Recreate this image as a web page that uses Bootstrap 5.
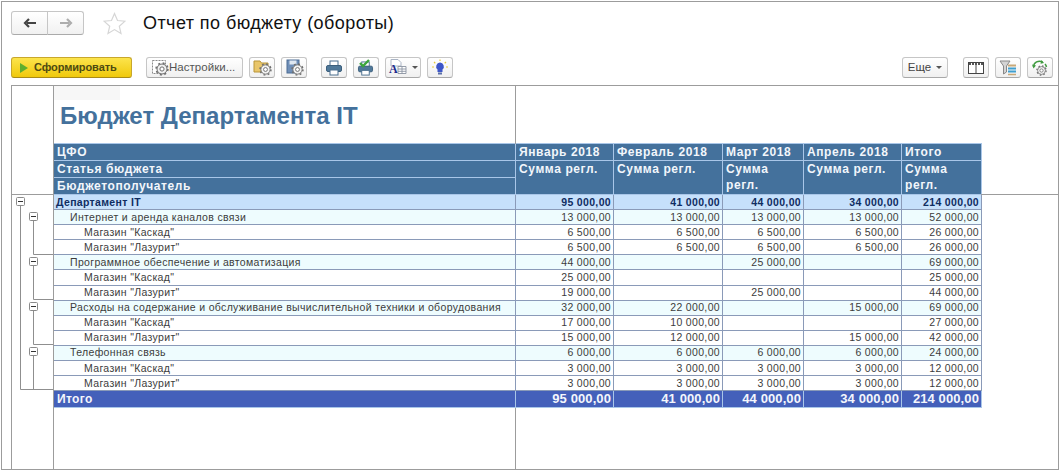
<!DOCTYPE html>
<html lang="ru">
<head>
<meta charset="utf-8">
<title>Отчет по бюджету (обороты)</title>
<link href="https://cdn.jsdelivr.net/npm/bootstrap@5.3.0/dist/css/bootstrap.min.css" rel="stylesheet">
<style>
html,body{margin:0;background:#fff;overflow:hidden}
body{font-family:"Liberation Sans",Arial,sans-serif}
.frame{width:1058px;height:469px;margin:1px 0 0 1px;border:1px solid #9c9c9c;padding:9px 0 0 9px;overflow:hidden;display:flex;flex-direction:column}
.head-bar{height:24px;margin-bottom:22px}
.nav-pair{width:73px;height:24px;margin-right:19px}
.nav-btn{width:36.5px;height:24px;padding:0;display:flex;align-items:center;justify-content:center;background:linear-gradient(#fff,#f1f1f1);border:1px solid #c6c6c6;border-bottom-color:#aaa;border-radius:3px}
.page-name{font-size:18px;line-height:24px;color:#111;margin:0 0 0 17px;font-weight:400;letter-spacing:.43px}
.tool-bar{height:21px;margin-bottom:7px;padding-right:5px}
.tb{height:21px;padding:0;width:26px;display:flex;align-items:center;justify-content:center;background:linear-gradient(#fff,#f0f0f0);border:1px solid #c6c6c6;border-bottom-color:#a8a8a8;border-radius:3px;font-size:11.5px;color:#444;flex:none;line-height:1}
.tb-go{width:121px;margin-right:14px;justify-content:flex-start;padding-left:8px;gap:6px;background:linear-gradient(#fce44c,#f0c90c);border-color:#c8a72c;border-bottom-color:#a88b18;color:#4d4a12;font-weight:700;font-size:11px;letter-spacing:-.1px}
.tb-set{width:97px;margin-right:6px;justify-content:flex-start;padding-left:5px;gap:0;color:#555;letter-spacing:.03px}
.tb-more{width:46px;margin-left:auto;margin-right:15px;gap:5px}
.tb-font{width:36px}
.m6{margin-right:6px}.m14{margin-right:14px}
.caret-mini{width:0;height:0;border-left:3px solid transparent;border-right:3px solid transparent;border-top:3px solid #555}
.rpt-wrap{flex:1;min-height:0;margin:0}
.rpt.table{width:1047px;height:384px;table-layout:fixed;margin:0;border-collapse:collapse;font-size:10.5px;letter-spacing:.34px;--bs-table-bg:#fff}
.rpt.table>:not(caption)>*>*{padding:0;border:0 none;line-height:13px;vertical-align:middle;overflow:hidden;white-space:nowrap;color:#3c3c3c}
.rpt.table>tbody>tr>.gut{border-left:1px solid #9c9c9c;border-right:1px solid #9c9c9c;vertical-align:top;--bs-table-bg:#fff}
.rpt.table>tbody>tr>.gut-head{border-top:1px solid #9c9c9c;border-bottom:1px solid #9c9c9c}
.rpt.table>tbody>tr>.ttl{border-top:1px solid #9c9c9c;border-right:1px solid #9c9c9c;vertical-align:top;height:58px}
.rpt.table>tbody>tr>.blank{border-top:1px solid #9c9c9c}
.rpt.table>tbody>tr>.fill-top{border-bottom:1px solid #9c9c9c}
.rpt.table>tbody>tr>.fill-mid{--bs-table-bg:#fff}
.rpt.table>tbody>tr>.low{border-right:1px solid #9c9c9c}
.strip{width:66px;height:14px;background:#f7f7f7}
.rep-title{font-size:24px;font-weight:700;line-height:30px;color:#44719c;letter-spacing:0;padding-left:6px;margin:1px 0 0}
.rpt.table>tbody>tr>.hc{--bs-table-bg:#44719c;color:#f2f6fb;border:1px solid #a9c6e8;font-size:12px;font-weight:700;padding:0 3px;line-height:16px;letter-spacing:.6px;height:17px;white-space:normal;vertical-align:top}
.rpt.table>tbody>tr>.dc{border:1px solid #8a9ab8;height:15px;text-align:right;padding:0 2px 0 0}
.rpt.table>tbody>tr>.nm{text-align:left;padding:0}
.rpt.table>tbody>tr>.pad1{padding-left:16px}
.rpt.table>tbody>tr>.pad2{padding-left:30px}
.rpt.table>tbody>tr>.cell-dept{--bs-table-bg:#c6e0fb;color:#0f2d62;font-weight:700}
.rpt.table>tbody>tr>.nm.cell-dept{padding-left:2px}
.r-grp>td{--bs-table-bg:#eefcfe}
.rpt.table>tbody>tr.r-tot>.dc{--bs-table-bg:#4460ba;color:#f4f6fc;font-weight:700;font-size:12px;letter-spacing:.35px;height:16px;line-height:14px;border-color:#a9c6e8}
.rpt.table>tbody>tr.r-tot>.num-big{font-size:13px;letter-spacing:.1px}
.rpt.table>tbody>tr.r-tot>.nm{padding-left:3px}
svg{display:block}
</style>
</head>
<body>
<svg width="0" height="0" style="position:absolute">
<defs>
<symbol id="gear" viewBox="0 0 14 14"><circle cx="7" cy="7" r="5" fill="#f2f2f2" stroke="#6f6f6f" stroke-width="1"/><circle cx="7" cy="7" r="5.9" fill="none" stroke="#6f6f6f" stroke-width="1.6" stroke-dasharray="2 2.63"/><circle cx="7" cy="7" r="2.1" fill="#fff" stroke="#6f6f6f" stroke-width="1"/></symbol>
<symbol id="printer" viewBox="0 0 18 16"><rect x="5" y="1" width="8" height="5" fill="#fff" stroke="#4a6f8f"/><rect x="1.5" y="5.5" width="15" height="6" rx="1.5" fill="#4f7899" stroke="#3c5f7c"/><rect x="5" y="10" width="8" height="5" fill="#fff" stroke="#4a6f8f"/></symbol>
</defs>
</svg>
<div class="frame">
  <div class="head-bar d-flex align-items-center">
    <div class="nav-pair btn-group">
      <button class="nav-btn btn" type="button" aria-label="Назад"><svg width="14" height="10" viewBox="0 0 14 10"><path d="M13 5H4M6 1 2 5l4 4" fill="none" stroke="#444" stroke-width="2.2"/></svg></button>
      <button class="nav-btn btn" type="button" aria-label="Вперед"><svg width="14" height="10" viewBox="0 0 14 10"><path d="M1 5h9M8 1l4 4-4 4" fill="none" stroke="#adadad" stroke-width="2.2"/></svg></button>
    </div>
    <svg width="23" height="23" viewBox="0 0 23 23"><path d="M11.5 1.5l3 7 7.5.7-5.7 5 1.7 7.3-6.5-3.9-6.5 3.9 1.7-7.3L1 9.2l7.5-.7z" fill="#fff" stroke="#d6d6d6" stroke-width="1.2"/></svg>
    <h1 class="page-name">Отчет по бюджету (обороты)</h1>
  </div>
  <div class="tool-bar d-flex align-items-center">
    <button class="tb tb-go btn" type="button"><svg width="8" height="10" viewBox="0 0 8 10"><path d="M0 0l8 5-8 5z" fill="#5fae2e"/></svg>Сформировать</button>
    <button class="tb tb-set btn" type="button"><svg width="17" height="17" viewBox="0 0 17 17"><rect x=".5" y="1.5" width="13" height="13" fill="#fff" stroke="#8b8b8b" stroke-dasharray="2 1"/><use href="#gear" x="3" y="3" width="14" height="14"/></svg>Настройки...</button>
    <button class="tb m6 btn" type="button" aria-label="Открыть настройки"><svg width="19" height="17" viewBox="0 0 19 17"><path d="M1 2h6l1.500 2H15v9H1z" fill="#e9c66a" stroke="#b99538"/><use href="#gear" x="6" y="4" width="13" height="13"/></svg></button>
    <button class="tb m14 btn" type="button" aria-label="Сохранить настройки"><svg width="19" height="17" viewBox="0 0 19 17"><rect x="2" y="1" width="12" height="13" fill="#6f8fb8" stroke="#4d6c94"/><rect x="4.500" y="1.500" width="7" height="4" fill="#dfe8f2"/><use href="#gear" x="6" y="4" width="13" height="13"/></svg></button>
    <button class="tb m6 btn" type="button" aria-label="Печать"><svg width="18" height="16"><use href="#printer" width="18" height="16"/></svg></button>
    <button class="tb m6 btn" type="button" aria-label="Предпросмотр"><svg width="18" height="17" viewBox="0 0 18 17"><use href="#printer" y="2" width="17" height="15"/><path d="M3 4l3 3 6-6" fill="none" stroke="#3ba53b" stroke-width="2.4"/></svg></button>
    <button class="tb tb-font m6 btn" type="button" aria-label="Шрифт"><span class="d-flex align-items-center gap-1"><svg width="20" height="18" viewBox="0 0 20 18"><path d="M3 .5h7l3 3V7H3z" fill="#fff" stroke="#aab4c4"/><text x="1" y="14" font-family="Liberation Serif" font-weight="700" font-size="12" fill="#1c2a8c">A</text><path d="M10 7.500h8v7h-8zM10 10h8M10 12.300h8M14 7.500v7" fill="#fff" stroke="#8a93a2" stroke-width=".9"/></svg><i class="caret-mini"></i></span></button>
    <button class="tb btn" type="button" aria-label="Подсказка"><svg width="18" height="17" viewBox="0 0 18 17"><path d="M9 3.500a4 4 0 0 1 2.500 7V13h-5v-2.500A4 4 0 0 1 9 3.500z" fill="#3d56c8"/><rect x="7" y="13.500" width="4" height="2" fill="#5a6fa8"/><path d="M9 .5v1.500M3 3l1.300 1.200M15 3l-1.300 1.200M1 8h2M15 8h2" stroke="#e6c93a" stroke-width="1.200"/></svg></button>
    <button class="tb tb-more btn" type="button">Еще<i class="caret-mini"></i></button>
    <button class="tb m6 btn" type="button" aria-label="Колонки"><svg width="16" height="12" viewBox="0 0 16 12"><rect x=".5" y=".5" width="15" height="11" fill="#fff" stroke="#444"/><path d="M1 2h14" stroke="#555" stroke-width="2" stroke-dasharray="2 1"/><path d="M8 3v9" stroke="#444"/></svg></button>
    <button class="tb m6 btn" type="button" aria-label="Отбор"><svg width="18" height="16" viewBox="0 0 18 16"><path d="M1 1h10L7.500 6v6L4.500 14V6z" fill="#d4d4d4" stroke="#888"/><path d="M9 5.500h8" stroke="#c9a878" stroke-width="2"/><path d="M9 8.500h8M9 11.500h8" stroke="#3f9fd0" stroke-width="2"/><path d="M9 14.500h8" stroke="#c9a878" stroke-width="1.500"/></svg></button>
    <button class="tb btn" type="button" aria-label="Обновить"><svg width="18" height="17" viewBox="0 0 18 17"><path d="M2.500 8a6 6 0 0 1 9-5" fill="none" stroke="#3f9a3f" stroke-width="1.500"/><path d="M14 5a6 6 0 0 1 1.500 3" fill="none" stroke="#3f9a3f" stroke-width="1.500"/><path d="M1 5.500l1.500 4 2.500-3zM10.500 1l2.500 3-3.500.8z" fill="#3f9a3f"/><use href="#gear" x="5" y="6" width="11" height="11"/></svg></button>
  </div>
  <div class="rpt-wrap">
  <table class="rpt table">
    <colgroup><col style="width:42px"><col style="width:462px"><col style="width:98px"><col style="width:109px"><col style="width:81px"><col style="width:98px"><col style="width:80px"><col></colgroup>
    <tbody>
      <tr>
        <td class="gut gut-head" rowspan="4"></td>
        <td class="ttl"><div class="strip"></div><h2 class="rep-title">Бюджет Департамента IT</h2></td>
        <td class="blank" colspan="6"></td>
      </tr>
      <tr><td class="hc">ЦФО</td><td class="hc">Январь 2018</td><td class="hc">Февраль 2018</td><td class="hc">Март 2018</td><td class="hc">Апрель 2018</td><td class="hc">Итого</td><td class="fill-top" rowspan="3"></td></tr>
      <tr><td class="hc">Статья бюджета</td><td class="hc" rowspan="2">Сумма регл.</td><td class="hc" rowspan="2">Сумма регл.</td><td class="hc" rowspan="2">Сумма регл.</td><td class="hc" rowspan="2">Сумма регл.</td><td class="hc" rowspan="2">Сумма регл.</td></tr>
      <tr><td class="hc">Бюджетополучатель</td></tr>

      <tr><td class="gut" rowspan="14"><svg width="41" height="212" viewBox="0 0 41 212" aria-hidden="true">
        <g fill="none" stroke="#8f8f8f">
          <path d="M8.500 11V194.500H41"/>
          <path d="M21.500 26V59.500H41M21.500 71V104.500H41M21.500 116V149.500H41M21.500 161V194.500"/>
          <g fill="#fff" stroke="#8a8a8a">
            <rect x="4.500" y="2.500" width="8" height="8" rx="1"/>
            <rect x="17.500" y="17.500" width="8" height="8" rx="1"/>
            <rect x="17.500" y="62.500" width="8" height="8" rx="1"/>
            <rect x="17.500" y="107.500" width="8" height="8" rx="1"/>
            <rect x="17.500" y="152.500" width="8" height="8" rx="1"/>
          </g>
          <path d="M6 6.500h5M19 21.500h5M19 66.500h5M19 111.500h5M19 156.500h5" stroke="#333"/>
        </g></svg></td>
        <td class="dc nm cell-dept">Департамент IT</td><td class="dc cell-dept">95 000,00</td><td class="dc cell-dept">41 000,00</td><td class="dc cell-dept">44 000,00</td><td class="dc cell-dept">34 000,00</td><td class="dc cell-dept">214 000,00</td><td class="fill-mid" rowspan="14"></td></tr>
      <tr class="r-grp"><td class="dc nm pad1">Интернет и аренда каналов связи</td><td class="dc">13 000,00</td><td class="dc">13 000,00</td><td class="dc">13 000,00</td><td class="dc">13 000,00</td><td class="dc">52 000,00</td></tr>
      <tr><td class="dc nm pad2">Магазин "Каскад"</td><td class="dc">6 500,00</td><td class="dc">6 500,00</td><td class="dc">6 500,00</td><td class="dc">6 500,00</td><td class="dc">26 000,00</td></tr>
      <tr><td class="dc nm pad2">Магазин "Лазурит"</td><td class="dc">6 500,00</td><td class="dc">6 500,00</td><td class="dc">6 500,00</td><td class="dc">6 500,00</td><td class="dc">26 000,00</td></tr>
      <tr class="r-grp"><td class="dc nm pad1">Программное обеспечение и автоматизация</td><td class="dc">44 000,00</td><td class="dc"></td><td class="dc">25 000,00</td><td class="dc"></td><td class="dc">69 000,00</td></tr>
      <tr><td class="dc nm pad2">Магазин "Каскад"</td><td class="dc">25 000,00</td><td class="dc"></td><td class="dc"></td><td class="dc"></td><td class="dc">25 000,00</td></tr>
      <tr><td class="dc nm pad2">Магазин "Лазурит"</td><td class="dc">19 000,00</td><td class="dc"></td><td class="dc">25 000,00</td><td class="dc"></td><td class="dc">44 000,00</td></tr>
      <tr class="r-grp"><td class="dc nm pad1">Расходы на содержание и обслуживание вычислительной техники и оборудования</td><td class="dc">32 000,00</td><td class="dc">22 000,00</td><td class="dc"></td><td class="dc">15 000,00</td><td class="dc">69 000,00</td></tr>
      <tr><td class="dc nm pad2">Магазин "Каскад"</td><td class="dc">17 000,00</td><td class="dc">10 000,00</td><td class="dc"></td><td class="dc"></td><td class="dc">27 000,00</td></tr>
      <tr><td class="dc nm pad2">Магазин "Лазурит"</td><td class="dc">15 000,00</td><td class="dc">12 000,00</td><td class="dc"></td><td class="dc">15 000,00</td><td class="dc">42 000,00</td></tr>
      <tr class="r-grp"><td class="dc nm pad1">Телефонная связь</td><td class="dc">6 000,00</td><td class="dc">6 000,00</td><td class="dc">6 000,00</td><td class="dc">6 000,00</td><td class="dc">24 000,00</td></tr>
      <tr><td class="dc nm pad2">Магазин "Каскад"</td><td class="dc">3 000,00</td><td class="dc">3 000,00</td><td class="dc">3 000,00</td><td class="dc">3 000,00</td><td class="dc">12 000,00</td></tr>
      <tr><td class="dc nm pad2">Магазин "Лазурит"</td><td class="dc">3 000,00</td><td class="dc">3 000,00</td><td class="dc">3 000,00</td><td class="dc">3 000,00</td><td class="dc">12 000,00</td></tr>
      <tr class="r-tot"><td class="dc nm">Итого</td><td class="dc num-big">95 000,00</td><td class="dc num-big">41 000,00</td><td class="dc num-big">44 000,00</td><td class="dc num-big">34 000,00</td><td class="dc num-big">214 000,00</td></tr>

      <tr><td class="gut"></td><td class="low"></td><td colspan="6"></td></tr>
    </tbody>
  </table>
  </div>
</div>
<script src="https://cdn.jsdelivr.net/npm/bootstrap@5.3.0/dist/js/bootstrap.bundle.min.js"></script>
</body>
</html>
